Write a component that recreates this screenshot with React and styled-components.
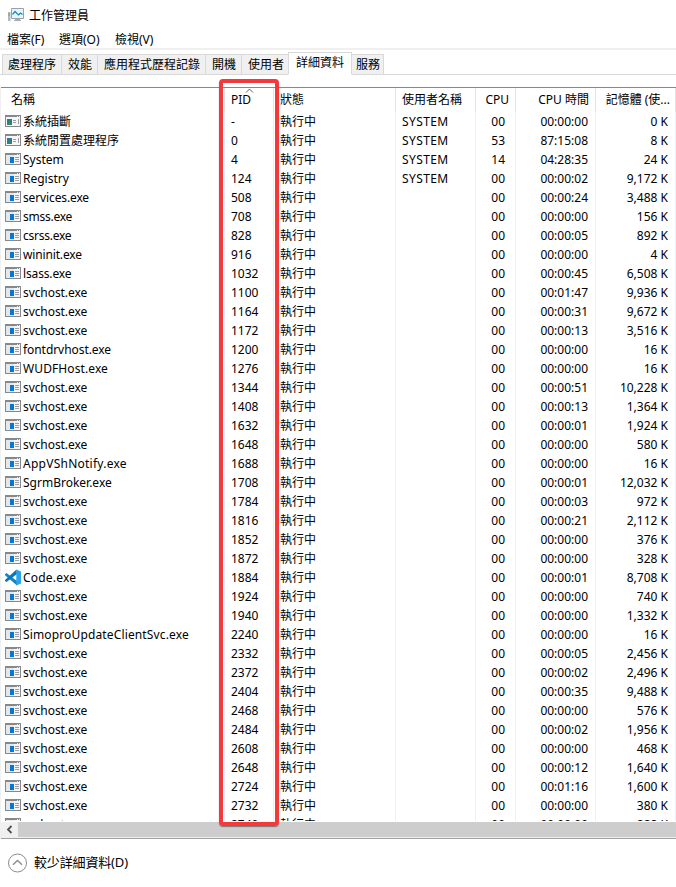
import React from 'react';
import styled, { createGlobalStyle } from 'styled-components';

const GlobalStyle = createGlobalStyle`
  * { box-sizing: border-box; }
  body {
    margin: 0;
    background: #fff;
    overflow: hidden;
  }
`;

const Window = styled.div`
  position: relative;
  display: flex;
  flex-direction: column;
  width: 676px;
  height: 887px;
  overflow: hidden;
  background: #fff;
  color: #000;
  font: 12px/19px "Noto Sans", "Noto Sans CJK TC", sans-serif;
  white-space: nowrap;
`;

const TitleBar = styled.header`
  display: flex;
  align-items: center;
  gap: 5px;
  height: 30px;
  padding-left: 8px;
`;

const MenuBar = styled.nav`
  display: flex;
  gap: 14px;
  height: 18px;
  padding-left: 7px;
  align-items: center;
`;

const MenuItem = styled.span`
  width: ${(p) => p.$width}px;
`;

const TabStrip = styled.div`
  display: flex;
  align-items: flex-end;
  height: 27px;
  border-top: 2px solid #f0f0f0;
  padding-left: 2px;
  background: linear-gradient(#d9d9d9, #d9d9d9) bottom / 100% 1px no-repeat;
`;

const Tab = styled.div`
  flex: none;
  width: ${(p) => p.$width}px;
  height: ${(p) => (p.$active ? 23 : 21)}px;
  padding-left: ${(p) => p.$pad ?? 7}px;
  line-height: 19px;
  background: ${(p) => (p.$active ? '#fff' : '#f0f0f0')};
  border: 1px solid #d9d9d9;
  border-bottom-color: ${(p) => (p.$active ? '#fff' : '#d9d9d9')};
  border-left-width: ${(p) => (p.$first || p.$active ? 1 : 0)}px;
  border-right-width: ${(p) => (p.$beforeActive ? 0 : 1)}px;
`;

const ListFrame = styled.main`
  display: flex;
  flex-direction: column;
  height: 752px;
  margin: 12px 0 0 1px;
  border-top: 1px solid #828790;
  border-bottom: 1px solid #a0a0a0;
  box-shadow: -1px 0 #f0f0f0;
`;

const columns = '224px 49px 122px 80px 40px 80px 80px';

const HeaderRow = styled.div`
  display: grid;
  grid-template-columns: ${columns};
  flex: none;
  height: 24px;
`;

const HeaderCell = styled.div`
  position: relative;
  border-right: 1px solid #e5e5e5;
  padding: 2px ${(p) => p.$right ?? 5}px 0 ${(p) => p.$left ?? 7}px;
  text-align: ${(p) => (p.$end ? 'right' : 'left')};
`;

const SortArrow = styled.svg`
  position: absolute;
  left: 20px;
  top: 0;
`;

const Body = styled.div`
  flex: none;
  height: 709px;
  margin-bottom: 1px;
  overflow: hidden;
`;

const Row = styled.div`
  display: grid;
  grid-template-columns: ${columns};
  height: 19px;
`;

const Cell = styled.div`
  border-right: 1px solid #e8f2fc;
  padding-left: ${(p) => p.$left ?? 6}px;
  padding-right: ${(p) => p.$right ?? 0}px;
  text-align: ${(p) => (p.$end ? 'right' : 'left')};
  letter-spacing: ${(p) => p.$tracking ?? 0}px;
`;

const NameCell = styled(Cell)`
  display: flex;
  gap: 2px;
  padding-left: 4px;

  svg { flex: none; }
`;

const ScrollBar = styled.div`
  display: flex;
  height: 16px;
  background: #cdcdcd;
  border-bottom: 1px solid #f0f0f0;
`;

const ScrollButton = styled.div`
  display: grid;
  place-items: center;
  width: 17px;
  background: #f0f0f0;
`;

const Footer = styled.footer`
  display: flex;
  align-items: center;
  gap: 7px;
  height: 47px;
  padding-left: 7px;
  font-size: 13px;
  letter-spacing: -0.15px;
`;

const Highlight = styled.div`
  position: absolute;
  left: 219px;
  top: 79px;
  width: 60px;
  height: 747px;
  border: 4px solid #f5393b;
  border-radius: 4px;
  box-shadow: 0 1px 1px #777;
`;

const TaskManagerIcon = () => (
  <svg width="16" height="16" viewBox="0 0 16 16">
    <path d="M0 5h2.5v9H0z" fill="#b5b8bb" />
    <path d="M.5 6h1.2v3H.5z" fill="#76b852" />
    <path d="M3.5 1.5h12v10h-12z" fill="#e6f5fc" stroke="#9aa0a5" />
    <path d="M4.5 7.5L7 4.5l3.5 3.5L12.5 6l2 1.5" fill="none" stroke="#1687c4" strokeWidth="1.2" />
    <path d="M7 12h5v1h1v1H6v-1h1z" fill="#a8acb0" />
  </svg>
);

const ProcessIcon = ({ system }) => (
  <svg width="16" height="19" viewBox="0 0 16 19" shapeRendering="crispEdges">
    <path d="M0 3h16v12H0z" fill="#85898e" />
    <path d="M1 5h14v9H1z" fill={system ? '#f6f6f6' : '#e7e7e7'} />
    <path d="M9 5h6v9H9z" fill="#f5f5f5" />
    <path d="M12 4h1v1h-1zM14 4h1v1h-1z" fill="#e8e8e8" />
    {system ? (
      <>
        <path d="M2 7h5v3H2z" fill="#287b9b" />
        <path d="M2 10h5v3H2z" fill="#378564" />
        <path d="M8 8h3v1H8zM8 10h3v1H8zM13 7h1v5h-1z" fill="#9b9fa3" />
      </>
    ) : (
      <>
        <path d="M5 7h4v6H5z" fill="#0078d7" />
        <path d="M10 7h4v1h-4zM10 9h4v1h-4zM10 11h4v1h-4z" fill="#9b9fa3" />
      </>
    )}
  </svg>
);

const CodeIcon = () => (
  <svg width="16" height="19" viewBox="0 0 16 19">
    <path d="M0 6.2L1.5 5 12 12.9v4.5L0 7.3z" fill="#1683ca" />
    <path d="M0 12.1L11.5 1.6 12 6.1 1.5 14 0 12.9z" fill="#0875bd" />
    <path d="M11.3 1.5L16 3.6v11.8l-4.7 2.1z" fill="#28a4eb" />
  </svg>
);

const tabs = [
  ['處理程序', 60, 5], ['效能', 36, 6], ['應用程式歷程記錄', 108, 6], ['開機', 36, 6],
  ['使用者', 46, 6], ['詳細資料', 64, 7], ['服務', 32, 4],
];

/* Letter-spacing per process name, in pixels. */
const nameTracking = {
  'svchost.exe': -0.08,
  'services.exe': -0.13,
  'smss.exe': -0.25,
  'csrss.exe': -0.25,
  'wininit.exe': -0.15,
  'lsass.exe': -0.15,
  'fontdrvhost.exe': -0.06,
  'WUDFHost.exe': 0.1,
  'AppVShNotify.exe': 0.25,
  'Code.exe': 0.2,
  'SimoproUpdateClientSvc.exe': 0.14,
};

const processes = [
  ['系統插斷', '-', '00', '00:00:00', '0'],
  ['系統閒置處理程序', '0', '53', '87:15:08', '8'],
  ['System', '4', '14', '04:28:35', '24'],
  ['Registry', '124', '00', '00:00:02', '9,172'],
  ['services.exe', '508', '00', '00:00:24', '3,488'],
  ['smss.exe', '708', '00', '00:00:00', '156'],
  ['csrss.exe', '828', '00', '00:00:05', '892'],
  ['wininit.exe', '916', '00', '00:00:00', '4'],
  ['lsass.exe', '1032', '00', '00:00:45', '6,508'],
  ['svchost.exe', '1100', '00', '00:01:47', '9,936'],
  ['svchost.exe', '1164', '00', '00:00:31', '9,672'],
  ['svchost.exe', '1172', '00', '00:00:13', '3,516'],
  ['fontdrvhost.exe', '1200', '00', '00:00:00', '16'],
  ['WUDFHost.exe', '1276', '00', '00:00:00', '16'],
  ['svchost.exe', '1344', '00', '00:00:51', '10,228'],
  ['svchost.exe', '1408', '00', '00:00:13', '1,364'],
  ['svchost.exe', '1632', '00', '00:00:01', '1,924'],
  ['svchost.exe', '1648', '00', '00:00:00', '580'],
  ['AppVShNotify.exe', '1688', '00', '00:00:00', '16'],
  ['SgrmBroker.exe', '1708', '00', '00:00:01', '12,032'],
  ['svchost.exe', '1784', '00', '00:00:03', '972'],
  ['svchost.exe', '1816', '00', '00:00:21', '2,112'],
  ['svchost.exe', '1852', '00', '00:00:00', '376'],
  ['svchost.exe', '1872', '00', '00:00:00', '328'],
  ['Code.exe', '1884', '00', '00:00:01', '8,708'],
  ['svchost.exe', '1924', '00', '00:00:00', '740'],
  ['svchost.exe', '1940', '00', '00:00:00', '1,332'],
  ['SimoproUpdateClientSvc.exe', '2240', '00', '00:00:00', '16'],
  ['svchost.exe', '2332', '00', '00:00:05', '2,456'],
  ['svchost.exe', '2372', '00', '00:00:02', '2,496'],
  ['svchost.exe', '2404', '00', '00:00:35', '9,488'],
  ['svchost.exe', '2468', '00', '00:00:00', '576'],
  ['svchost.exe', '2484', '00', '00:00:02', '1,956'],
  ['svchost.exe', '2608', '00', '00:00:00', '468'],
  ['svchost.exe', '2648', '00', '00:00:12', '1,640'],
  ['svchost.exe', '2724', '00', '00:01:16', '1,600'],
  ['svchost.exe', '2732', '00', '00:00:00', '380'],
  ['svchost.exe', '2740', '00', '00:00:00', '888'],
];

export default function App() {
  return (
    <>
      <GlobalStyle />
      <Window>
        <TitleBar><TaskManagerIcon /><span>工作管理員</span></TitleBar>
        <MenuBar>
          <MenuItem $width={38}>檔案(F)</MenuItem>
          <MenuItem $width={42}>選項(O)</MenuItem>
          <MenuItem $width={40}>檢視(V)</MenuItem>
        </MenuBar>
        <TabStrip>
          {tabs.map(([label, width, pad], i) => (
            <Tab key={label} $width={width} $pad={pad} $first={i === 0} $active={i === 5} $beforeActive={i === 4}>
              {label}
            </Tab>
          ))}
        </TabStrip>
        <ListFrame>
          <HeaderRow>
            <HeaderCell $left={10}>名稱</HeaderCell>
            <HeaderCell $left={6}>
              PID
              <SortArrow width="9" height="5" viewBox="0 0 9 5">
                <path d="M1 4.5l3.5-3.5L8 4.5" fill="none" stroke="#606060" />
              </SortArrow>
            </HeaderCell>
            <HeaderCell $left={6}>狀態</HeaderCell>
            <HeaderCell $left={6}>使用者名稱</HeaderCell>
            <HeaderCell $end $right={6}>CPU</HeaderCell>
            <HeaderCell $end $right={6}>CPU 時間</HeaderCell>
            <HeaderCell $end>記憶體 (使...</HeaderCell>
          </HeaderRow>
          <Body>
            {processes.map(([name, pid, cpu, time, memory], i) => (
              <Row key={pid}>
                <NameCell $tracking={nameTracking[name]}>
                  {name === 'Code.exe' ? <CodeIcon /> : <ProcessIcon system={i < 2} />}
                  <span>{name}</span>
                </NameCell>
                <Cell>{pid}</Cell>
                <Cell>執行中</Cell>
                <Cell $tracking={0.4}>{i < 4 ? 'SYSTEM' : ''}</Cell>
                <Cell $end $right={10}>{cpu}</Cell>
                <Cell $end $right={7}>{time}</Cell>
                <Cell $end $right={7}>{memory} K</Cell>
              </Row>
            ))}
          </Body>
          <ScrollBar>
            <ScrollButton>
              <svg width="7" height="9" viewBox="0 0 7 9">
                <path d="M5.5 1L2 4.5 5.5 8" fill="none" stroke="#505050" strokeWidth="1.8" />
              </svg>
            </ScrollButton>
          </ScrollBar>
        </ListFrame>
        <Footer>
          <svg width="20" height="20" viewBox="0 0 20 20">
            <circle cx="10.5" cy="10" r="9" fill="#fff" stroke="#8c8c8c" />
            <path d="M6 11.8l4.5-4.3 4.5 4.3" fill="none" stroke="#8c8c8c" strokeWidth="1.4" />
          </svg>
          <span>較少詳細資料(D)</span>
        </Footer>
        <Highlight />
      </Window>
    </>
  );
}
